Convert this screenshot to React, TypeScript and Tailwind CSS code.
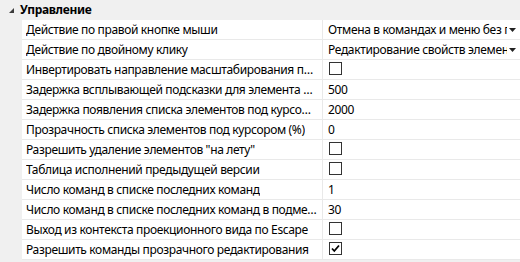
import React from "react";

type Row =
  | { label: string; kind: "dropdown"; value: string }
  | { label: string; kind: "text"; value: string }
  | { label: string; kind: "check"; checked: boolean };

const rows: Row[] = [
  { label: "Действие по правой кнопке мыши", kind: "dropdown", value: "Отмена в командах и меню без подтверждения" },
  { label: "Действие по двойному клику", kind: "dropdown", value: "Редактирование свойств элемента" },
  { label: "Инвертировать направление масштабирования прокруткой колеса мыши", kind: "check", checked: false },
  { label: "Задержка всплывающей подсказки для элемента под курсором (мс)", kind: "text", value: "500" },
  { label: "Задержка появления списка элементов под курсором (мс)", kind: "text", value: "2000" },
  { label: "Прозрачность списка элементов под курсором (%)", kind: "text", value: "0" },
  { label: "Разрешить удаление элементов \"на лету\"", kind: "check", checked: false },
  { label: "Таблица исполнений предыдущей версии", kind: "check", checked: false },
  { label: "Число команд в списке последних команд", kind: "text", value: "1" },
  { label: "Число команд в списке последних команд в подменю", kind: "text", value: "30" },
  { label: "Выход из контекста проекционного вида по Escape", kind: "check", checked: false },
  { label: "Разрешить команды прозрачного редактирования", kind: "check", checked: true },
];

function Checkbox({ checked }: { checked: boolean }) {
  return (
    <div className="ml-[6px] mt-[-2px] w-[13px] h-[13px] border border-[#333333] bg-white flex items-center justify-center">
      {checked && (
        <svg width="11" height="11" viewBox="0 0 11 11">
          <path d="M2 5.5 L4.3 8 L9 2.5" fill="none" stroke="#000" strokeWidth="1.8" />
        </svg>
      )}
    </div>
  );
}

export default function App() {
  return (
    <div
      className="w-[520px] h-[262px] bg-[#f0f0f0] overflow-hidden text-[12px] tracking-[-0.35px] text-black"
      style={{ fontFamily: '"Noto Sans", "DejaVu Sans", sans-serif' }}
    >
      <div className="flex h-[20px] items-center">
        <div className="w-[20px] flex items-center justify-center">
          <svg width="8" height="8" viewBox="0 0 8 8" className="ml-[4px] mt-[1px]">
            <path d="M6 1 L6 6 L1 6 Z" fill="#3c3c3c" />
          </svg>
        </div>
        <span className="font-bold leading-none">Управление</span>
      </div>
      {rows.map((r, i) => (
        <div key={i} className="flex h-[20px]">
          <div className="w-[22px] shrink-0" />
          <div className="w-[301px] shrink-0 bg-white border-r border-b border-[#e9e9e9] flex items-center pl-[4px] pr-[5px] overflow-hidden">
            <span className="truncate leading-[16px]">{r.label}</span>
          </div>
          <div className="flex-1 min-w-0 bg-white border-b border-[#e9e9e9] flex items-center overflow-hidden">
            {r.kind === "dropdown" && (
              <div className="flex items-center w-full pl-[5px]">
                <span className="flex-1 min-w-0 overflow-hidden whitespace-nowrap leading-[16px]">{r.value}</span>
                <svg width="7" height="4" viewBox="0 0 7 4" className="ml-[2px] mr-[4px] shrink-0">
                  <path d="M0 0 L7 0 L3.5 4 Z" fill="#222" />
                </svg>
              </div>
            )}
            {r.kind === "text" && <span className="pl-[5px] leading-[16px]">{r.value}</span>}
            {r.kind === "check" && <Checkbox checked={r.checked} />}
          </div>
        </div>
      ))}
    </div>
  );
}
